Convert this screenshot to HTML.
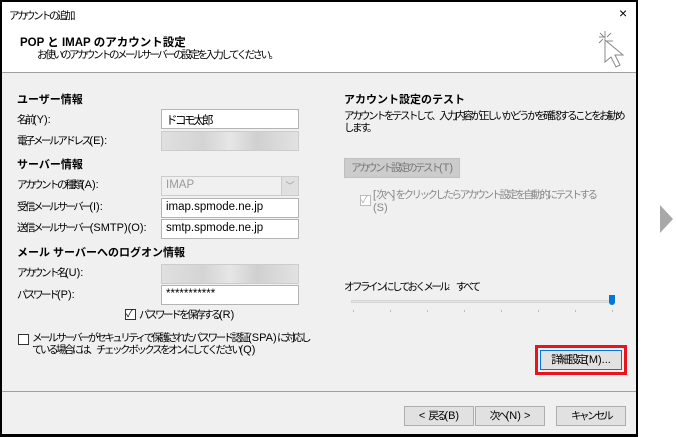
<!DOCTYPE html>
<html><head><meta charset="utf-8"><style>
*{margin:0;padding:0;box-sizing:border-box}
body{width:676px;height:437px;background:#fff;position:relative;overflow:hidden;font-family:"Liberation Sans","Noto Sans CJK JP",sans-serif;font-size:11px;color:#000}
.a{position:absolute;white-space:nowrap}
.j{letter-spacing:-2.5px;font-size:10.5px}
i{font-style:normal;letter-spacing:0;font-size:11px}
#frame{position:absolute;left:0;top:0;width:638px;height:437px;border:2px solid #000;border-bottom:3px solid #000;background:#f0f0f0}
#head{position:absolute;left:0;top:0;width:634px;height:71px;background:#fff;border-bottom:1px solid #a0a0a0}
.in{position:absolute;left:159px;width:138px;height:20px;background:#fff;border:1px solid #b4b4b4;padding:2px 4px;font-size:11.5px}
.blur{background:linear-gradient(90deg,#e0e0e0,#d4d4d4 30%,#e6e6e6 50%,#d0d0d0 70%,#e2e2e2);border-color:#ccc}
.b{font-weight:bold}
.btn{position:absolute;height:20px;background:#e1e1e1;border:1px solid #adadad;text-align:center;line-height:18px}
.cb{position:absolute;width:11px;height:11px;border:1px solid #333;background:#fff}
</style></head><body>
<div id="frame">
<div id="head">
<div class="a j" style="left:7px;top:6px">アカウントの追加</div>
<div class="a" style="left:617px;top:3px;font-size:14px">×</div>
<div class="a b" style="left:18px;top:32px;font-size:11.5px">POP と IMAP のアカウント設定</div>
<div class="a j" style="left:35px;top:45px">お使いのアカウントのメール サーバーの設定を入力してください。</div>
<svg class="a" style="left:595px;top:27px" width="32" height="44" viewBox="0 0 32 44"><g stroke="#888" fill="none" stroke-width="1"><path d="M8 2v8M2 8h6M14 4l-4 4M3 4l4 4M10 12h6M2 14l4-4"/><path d="M8 11l0 22 6-5 5 10 4-2-5-10 8 0z" fill="#fff"/></g></svg>
</div>
<div class="a b" style="left:15px;top:89px">ユーザー情報</div>
<div class="a j" style="left:15px;top:110px">名前<i>(Y):</i></div>
<div class="in j" style="top:107px">ドコモ太郎</div>
<div class="a j" style="left:15px;top:131px">電子メール アドレス<i>(E):</i></div>
<div class="in blur" style="top:129px"></div>
<div class="a b" style="left:15px;top:154px">サーバー情報</div>
<div class="a j" style="left:15px;top:175px">アカウントの種類<i>(A):</i></div>
<div class="in" style="top:174px;background:#f0f0f0;border-color:#ccc;color:#999">IMAP<span style="position:absolute;right:0;top:0;width:17px;height:18px;background:#e0e0e0;border-left:1px solid #ccc;text-align:center;font-size:9px;line-height:18px">﹀</span></div>
<div class="a j" style="left:15px;top:197px">受信メール サーバー<i>(I):</i></div>
<div class="in" style="top:196px">imap.spmode.ne.jp</div>
<div class="a j" style="left:15px;top:218px">送信メール サーバー <i>(SMTP)(O):</i></div>
<div class="in" style="top:217px">smtp.spmode.ne.jp</div>
<div class="a b" style="left:15px;top:242px">メール サーバーへのログオン情報</div>
<div class="a j" style="left:15px;top:263px">アカウント名<i>(U):</i></div>
<div class="in blur" style="top:262px"></div>
<div class="a j" style="left:15px;top:285px">パスワード<i>(P):</i></div>
<div class="in" style="top:283px">***********</div>
<div class="cb" style="left:123px;top:307px;font-size:10px;line-height:9px">✓</div>
<div class="a j" style="left:137px;top:305px">パスワードを保存する<i>(R)</i></div>
<div class="cb" style="left:16px;top:332px"></div>
<div class="a j" style="left:30px;top:330px;line-height:12px">メール サーバーがセキュリティで保護されたパスワード認証 <i>(SPA)</i> に対応し<br>ている場合には、チェック ボックスをオンにしてください<i>(Q)</i></div>
<div class="a b" style="left:342px;top:89px">アカウント設定のテスト</div>
<div class="a j" style="left:342px;top:108px;line-height:12px">アカウントをテストして、入力内容が正しいかどうかを確認することをお勧め<br>します。</div>
<div class="btn j" style="left:342px;top:156px;width:116px;background:#ccc;border-color:#bfbfbf;color:#777">アカウント設定のテスト<i>(T)</i></div>
<div class="cb" style="left:358px;top:193px;border-color:#bbb;color:#aaa;font-size:10px;line-height:9px">✓</div>
<div class="a j" style="left:371px;top:187px;line-height:13px;color:#888"><i>[</i>次へ<i>]</i> をクリックしたらアカウント設定を自動的にテストする<br><i>(S)</i></div>
<div class="a j" style="left:342px;top:277px">オフラインにしておくメール:　すべて</div>
<div class="a" style="left:349px;top:298px;width:262px;height:3px;background:#e2e2e2;border:1px solid #d6d6d6"></div>
<div class="a" style="left:607px;top:293px;width:6px;height:10px;background:#0078d7;border-radius:0 0 3px 3px"></div>
<div class="a" style="left:351px;top:308px;width:260px;height:2px;background:repeating-linear-gradient(90deg,#bbb 0 1px,transparent 1px 37px)"></div>
<div class="a" style="left:533px;top:343px;width:92px;height:30px;border:3px solid #e8141e"></div>
<div class="btn j" style="left:538px;top:348px;width:82px;border:1px solid #0078d7;line-height:18px;font-size:11px">詳細設定<i>(M)...</i></div>
<div class="a" style="left:0;top:389px;width:634px;height:1px;background:#a0a0a0"></div>
<div class="btn j" style="left:402px;top:404px;width:70px"><i>&lt; </i>戻る<i>(B)</i></div>
<div class="btn j" style="left:473px;top:404px;width:70px">次へ<i>(N) &gt;</i></div>
<div class="btn j" style="left:554px;top:404px;width:70px">キャンセル</div>
</div>
<svg class="a" style="left:660px;top:205px" width="14" height="28"><path d="M0 0L13 14L0 28z" fill="#a8a8a8"/></svg>
</body></html>
